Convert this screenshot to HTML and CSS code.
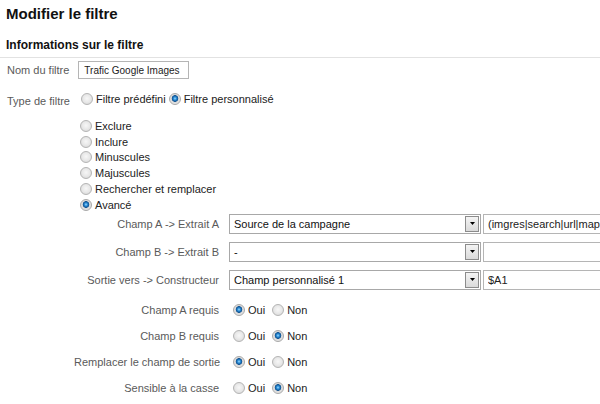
FILE: index.html
```html
<!DOCTYPE html>
<html lang="fr">
<head>
    <meta charset="UTF-8">
    <meta name="viewport" content="width=device-width, initial-scale=1.0">
    <title>Modifier le filtre</title>
    <link rel="stylesheet" href="styles.css">
</head>
<body>
    <div class="page">
        <h1 class="page-title">Modifier le filtre</h1>
        <h2 class="section-title">Informations sur le filtre</h2>

        <div class="field name-field">
            <label class="field-label" for="filterName">Nom du filtre</label>
            <input class="text-input name-input" id="filterName" type="text" value="Trafic Google Images">
        </div>

        <div class="field type-field">
            <span class="field-label">Type de filtre</span>
            <label class="choice"><input type="radio" name="type">Filtre prédéfini</label>
            <label class="choice"><input type="radio" name="type" checked>Filtre personnalisé</label>
        </div>

        <ul class="filter-kinds">
            <li><label class="choice"><input type="radio" name="kind">Exclure</label></li>
            <li><label class="choice"><input type="radio" name="kind">Inclure</label></li>
            <li><label class="choice"><input type="radio" name="kind">Minuscules</label></li>
            <li><label class="choice"><input type="radio" name="kind">Majuscules</label></li>
            <li><label class="choice"><input type="radio" name="kind">Rechercher et remplacer</label></li>
            <li><label class="choice"><input type="radio" name="kind" checked>Avancé</label></li>
        </ul>

        <div class="advanced">
            <div class="row">
                <span class="row-label">Champ A -&gt; Extrait A</span>
                <div class="select"><span class="select-value">Source de la campagne</span><span class="select-arrow"><svg width="5" height="3" viewBox="0 0 5 3"><path d="M0 0h5L2.5 3z" fill="#000"/></svg></span></div>
                <input class="text-input extract-input" type="text" value="(imgres|search|url|maps)">
            </div>
            <div class="row">
                <span class="row-label">Champ B -&gt; Extrait B</span>
                <div class="select"><span class="select-value">-</span><span class="select-arrow"><svg width="5" height="3" viewBox="0 0 5 3"><path d="M0 0h5L2.5 3z" fill="#000"/></svg></span></div>
                <input class="text-input extract-input" type="text" value="">
            </div>
            <div class="row">
                <span class="row-label">Sortie vers -&gt; Constructeur</span>
                <div class="select"><span class="select-value">Champ personnalisé 1</span><span class="select-arrow"><svg width="5" height="3" viewBox="0 0 5 3"><path d="M0 0h5L2.5 3z" fill="#000"/></svg></span></div>
                <input class="text-input extract-input" type="text" value="$A1">
            </div>

            <div class="row opt first-opt">
                <span class="row-label">Champ A requis</span>
                <label class="choice"><input type="radio" name="reqA" checked>Oui</label>
                <label class="choice"><input type="radio" name="reqA">Non</label>
            </div>
            <div class="row opt">
                <span class="row-label">Champ B requis</span>
                <label class="choice"><input type="radio" name="reqB">Oui</label>
                <label class="choice"><input type="radio" name="reqB" checked>Non</label>
            </div>
            <div class="row opt">
                <span class="row-label">Remplacer le champ de sortie</span>
                <label class="choice"><input type="radio" name="override" checked>Oui</label>
                <label class="choice"><input type="radio" name="override">Non</label>
            </div>
            <div class="row opt">
                <span class="row-label">Sensible à la casse</span>
                <label class="choice"><input type="radio" name="case">Oui</label>
                <label class="choice"><input type="radio" name="case" checked>Non</label>
            </div>
        </div>
    </div>
</body>
</html>
```

FILE: styles.css
```css
body {
    margin: 0;
    font-family: 'Liberation Sans', Arial, sans-serif;
    font-size: 11px;
    color: #222;
    background: #fff;
    overflow: hidden;
}
.page {
    padding: 0 6px;
}
.page-title {
    margin: 0;
    padding-top: 5px;
    font-size: 15px;
    line-height: 18px;
    font-weight: bold;
    color: #111;
}
.section-title {
    margin: 15px -6px 0 -6px;
    padding: 0 6px 4px 6px;
    font-size: 12px;
    line-height: 15px;
    font-weight: bold;
    color: #111;
    border-bottom: 1px solid #e2e2e2;
}
.field {
    display: flex;
    align-items: center;
}
.field-label {
    color: #5a5a5a;
    padding-left: 1px;
}
.name-field {
    margin-top: 3px;
    height: 18px;
}
.name-field .field-label {
    margin-right: 9px;
}
.text-input {
    box-sizing: border-box;
    border: 1px solid #b5b5b5;
    font-family: 'Liberation Sans', Arial, sans-serif;
    color: #222;
    margin: 0;
    outline: none;
}
.name-input {
    width: 111px;
    height: 18px;
    padding: 0 5px;
    font-size: 10px;
}
.type-field {
    margin-top: 12px;
    height: 16px;
}
.type-field .field-label {
    margin-right: 11px;
    position: relative;
    top: 2px;
}
.type-field .choice {
    margin-right: 3px;
}
.choice {
    display: inline-flex;
    align-items: center;
    color: #222;
}
.choice input {
    appearance: none;
    -webkit-appearance: none;
    box-sizing: border-box;
    width: 12px;
    height: 12px;
    margin: 0 3px 0 0;
    border-radius: 50%;
    border: 1px solid #b4b4b4;
    background: radial-gradient(circle at 50% 45%, #f7f7f7 0, #e8e8e8 50%, #d2d2d2 100%);
}
.choice input:checked {
    border-color: #a8a8a8;
    background: radial-gradient(circle at 50% 45%, #9edcff 0, #2a8cd6 1.5px, #0e508f 3px, #d8d8d8 3.6px, #f2f2f2 100%);
}
.filter-kinds {
    list-style: none;
    margin: 11px 0 0 74px;
    padding: 0;
}
.filter-kinds li {
    height: 15.8px;
    display: flex;
    align-items: center;
}
.advanced {
    margin-left: 68px;
    margin-top: 1px;
}
.row {
    display: flex;
    align-items: center;
    height: 20px;
    white-space: nowrap;
}
.row + .row {
    margin-top: 8px;
}
.row.opt {
    margin-top: 6px;
}
.row.first-opt {
    margin-top: 10px;
}
.row-label {
    width: 145px;
    flex: none;
    text-align: right;
    margin-right: 10px;
    color: #5a5a5a;
}
.row.opt .choice input {
    margin-left: 4px;
}
.row.opt .choice + .choice {
    margin-left: 3px;
}
.select {
    box-sizing: border-box;
    display: flex;
    align-items: stretch;
    width: 252px;
    height: 20px;
    flex: none;
    border: 1px solid #a8a8a8;
    background: #fff;
}
.select-value {
    flex: 1;
    padding-left: 4px;
    line-height: 18px;
    color: #111;
}
.select-arrow {
    box-sizing: border-box;
    width: 14px;
    margin: 1px;
    border: 1px solid #8c8c8c;
    background: linear-gradient(#f4f4f4, #dadada);
    display: flex;
    align-items: center;
    justify-content: center;
}
.extract-input {
    width: 140px;
    height: 20px;
    margin-left: 2px;
    padding: 0 4px;
    font-size: 11px;
    flex: none;
}
```
